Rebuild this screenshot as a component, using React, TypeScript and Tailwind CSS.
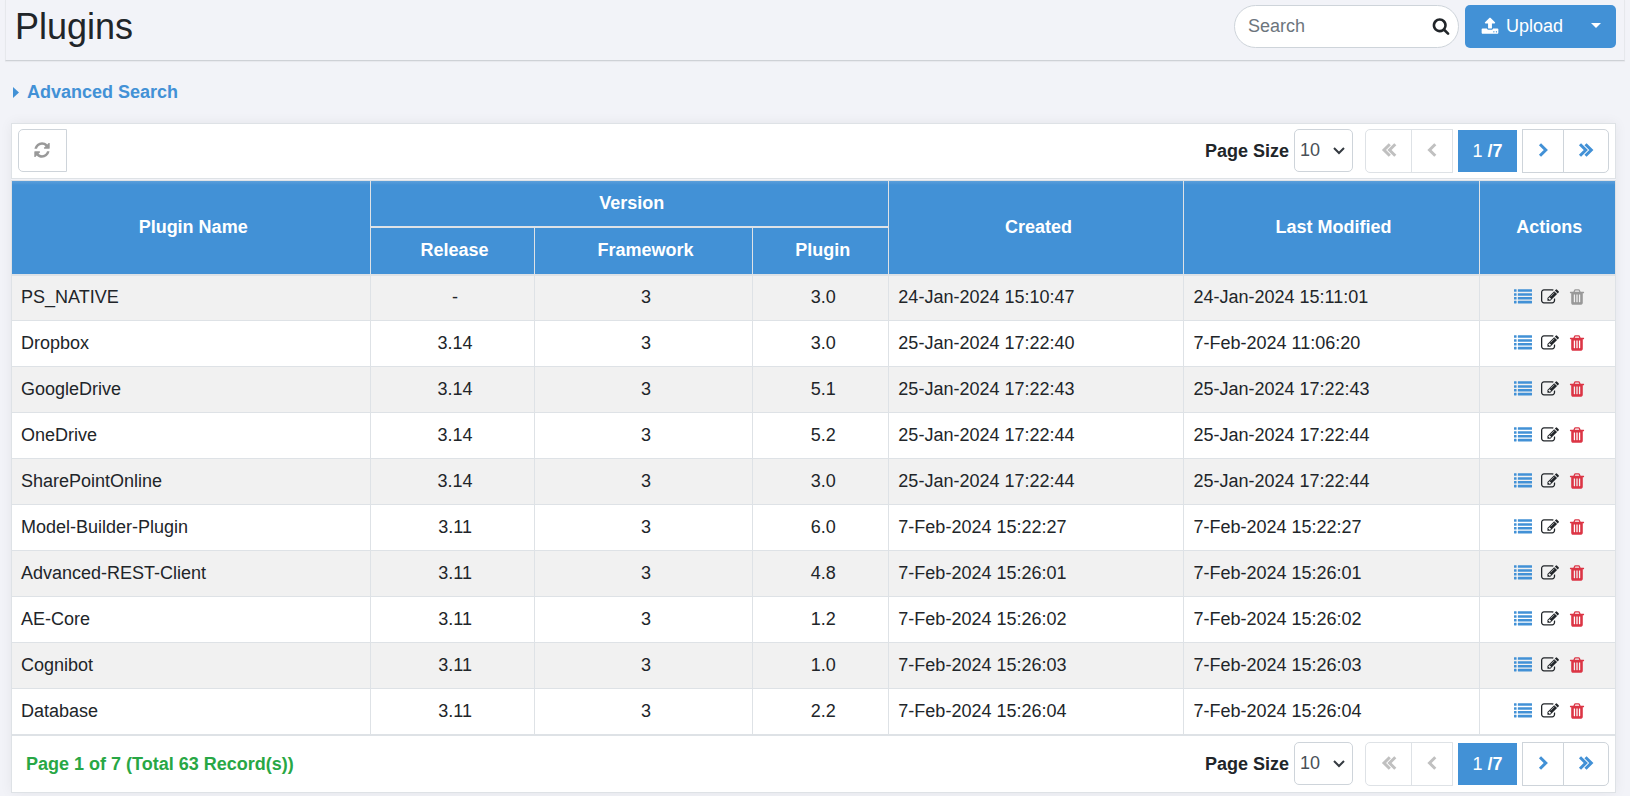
import type { ReactNode } from "react";

type Plugin = {
  name: string;
  release: string;
  framework: string;
  plugin: string;
  created: string;
  modified: string;
  locked?: boolean;
};

const plugins: Plugin[] = [
  { name: "PS_NATIVE", release: "-", framework: "3", plugin: "3.0", created: "24-Jan-2024 15:10:47", modified: "24-Jan-2024 15:11:01", locked: true },
  { name: "Dropbox", release: "3.14", framework: "3", plugin: "3.0", created: "25-Jan-2024 17:22:40", modified: "7-Feb-2024 11:06:20" },
  { name: "GoogleDrive", release: "3.14", framework: "3", plugin: "5.1", created: "25-Jan-2024 17:22:43", modified: "25-Jan-2024 17:22:43" },
  { name: "OneDrive", release: "3.14", framework: "3", plugin: "5.2", created: "25-Jan-2024 17:22:44", modified: "25-Jan-2024 17:22:44" },
  { name: "SharePointOnline", release: "3.14", framework: "3", plugin: "3.0", created: "25-Jan-2024 17:22:44", modified: "25-Jan-2024 17:22:44" },
  { name: "Model-Builder-Plugin", release: "3.11", framework: "3", plugin: "6.0", created: "7-Feb-2024 15:22:27", modified: "7-Feb-2024 15:22:27" },
  { name: "Advanced-REST-Client", release: "3.11", framework: "3", plugin: "4.8", created: "7-Feb-2024 15:26:01", modified: "7-Feb-2024 15:26:01" },
  { name: "AE-Core", release: "3.11", framework: "3", plugin: "1.2", created: "7-Feb-2024 15:26:02", modified: "7-Feb-2024 15:26:02" },
  { name: "Cognibot", release: "3.11", framework: "3", plugin: "1.0", created: "7-Feb-2024 15:26:03", modified: "7-Feb-2024 15:26:03" },
  { name: "Database", release: "3.11", framework: "3", plugin: "2.2", created: "7-Feb-2024 15:26:04", modified: "7-Feb-2024 15:26:04" },
];

const paths = {
  list: "M32 1280h192q32 0 32 32v192q0 32-32 32h-192q-32 0-32-32v-192q0-32 32-32zM32 896h192q32 0 32 32v192q0 32-32 32h-192q-32 0-32-32v-192q0-32 32-32zM32 512h192q32 0 32 32v192q0 32-32 32h-192q-32 0-32-32v-192q0-32 32-32zM32 128h192q32 0 32 32v192q0 32-32 32h-192q-32 0-32-32v-192q0-32 32-32zM416 1280h1344q32 0 32 32v192q0 32-32 32h-1344q-32 0-32-32v-192q0-32 32-32zM416 896h1344q32 0 32 32v192q0 32-32 32h-1344q-32 0-32-32v-192q0-32 32-32zM416 512h1344q32 0 32 32v192q0 32-32 32h-1344q-32 0-32-32v-192q0-32 32-32zM416 128h1344q32 0 32 32v192q0 32-32 32h-1344q-32 0-32-32v-192q0-32 32-32z",
  edit: "M888 1184l116-116-152-152-116 116v56h96v96h56zm440-720q-16-16-33 1l-350 350q-17 17-1 33t33-1l350-350q17-17 1-33zm80 594v190q0 119-84.5 203.5t-203.5 84.5h-832q-119 0-203.5-84.5t-84.5-203.5v-832q0-119 84.5-203.5t203.5-84.5h832q63 0 117 25 15 7 18 23 3 17-9 29l-49 49q-14 14-32 8-23-6-45-6h-832q-66 0-113 47t-47 113v832q0 66 47 113t113 47h832q66 0 113-47t47-113v-126q0-13 9-22l64-64q15-15 35-7t20 29zm-96-738l288 288-672 672h-288v-288zm444 132l-92 92-288-288 92-92q28-28 68-28t68 28l152 152q28 28 28 68t-28 68z",
  trash: "M704 1376v-704q0-14-9-23t-23-9h-64q-14 0-23 9t-9 23v704q0 14 9 23t23 9h64q14 0 23-9t9-23zm256 0v-704q0-14-9-23t-23-9h-64q-14 0-23 9t-9 23v704q0 14 9 23t23 9h64q14 0 23-9t9-23zm256 0v-704q0-14-9-23t-23-9h-64q-14 0-23 9t-9 23v704q0 14 9 23t23 9h64q14 0 23-9t9-23zm-544-992h448l-48-117q-7-9-17-11h-317q-10 2-17 11zm928 32v64q0 14-9 23t-23 9h-96v948q0 83-47 143.5t-113 60.5h-832q-66 0-113-58.5t-47-141.5v-952h-96q-14 0-23-9t-9-23v-64q0-14 9-23t23-9h309l70-167q15-37 54-63t79-26h320q40 0 79 26t54 63l70 167h309q14 0 23 9t9 23z",
  refresh: "M1639 1056q0 5-1 7-64 268-268 434.5t-478 166.5q-146 0-282.5-55t-243.5-157l-129 129q-19 19-45 19t-45-19-19-45v-448q0-26 19-45t45-19h448q26 0 45 19t19 45-19 45l-137 137q71 66 161 102t187 36q134 0 250-65t186-179q11-17 53-117 8-23 30-23h192q13 0 22.5 9.5t9.5 22.5zm25-800v448q0 26-19 45t-45 19h-448q-26 0-45-19t-19-45 19-45l138-138q-148-137-349-137-134 0-250 65t-186 179q-11 17-53 117-8 23-30 23h-199q-13 0-22.5-9.5t-9.5-22.5v-7q65-268 270-434.5t480-166.5q146 0 284 55.5t245 156.5l130-129q19-19 45-19t45 19 19 45z",
  upload: "M1344 1472q0-26-19-45t-45-19-45 19-19 45 19 45 45 19 45-19 19-45zm256 0q0-26-19-45t-45-19-45 19-19 45 19 45 45 19 45-19 19-45zm128-224v320q0 40-28 68t-68 28h-1472q-40 0-68-28t-28-68v-320q0-40 28-68t68-28h427q21 56 70.5 92t110.5 36h256q61 0 110.5-36t70.5-92h427q40 0 68 28t28 68zm-325-648q-17 40-59 40h-256v448q0 26-19 45t-45 19h-256q-26 0-45-19t-19-45v-448h-256q-42 0-59-40-17-39 14-69l448-448q18-19 45-19t45 19l448 448q31 30 14 69z",
  search: "M1216 832q0-185-131.5-316.5t-316.5-131.5-316.5 131.5-131.5 316.5 131.5 316.5 316.5 131.5 316.5-131.5 131.5-316.5zm512 832q0 52-38 90t-90 38q-54 0-90-38l-343-342q-179 124-399 124-143 0-273.5-55.5t-225-150-150-225-55.5-273.5 55.5-273.5 150-225 225-150 273.5-55.5 273.5 55.5 225 150 150 225 55.5 273.5q0 220-124 399l343 343q37 37 37 90z",
};

function Icon({ name }: { name: keyof typeof paths }) {
  return (
    <svg viewBox="0 0 1792 1792" aria-hidden="true" className="size-[18px] shrink-0 fill-current">
      <path d={paths[name]} />
    </svg>
  );
}

function Chevrons({ d }: { d: string }) {
  return (
    <svg viewBox="0 0 16 16" aria-hidden="true" className="size-4 fill-none stroke-current stroke-3">
      <path d={d} />
    </svg>
  );
}

function PageButton({ label, disabled, className, children }: { label: string; disabled?: boolean; className: string; children: ReactNode }) {
  return (
    <button
      type="button"
      aria-label={label}
      disabled={disabled}
      className={`flex h-11 items-center justify-center border border-[#ced4da] bg-white pb-0.5 text-[#4291d6] disabled:border-[#dee2e6] disabled:text-[#c0c0c0] ${className}`}
    >
      {children}
    </button>
  );
}

function Pager({ id }: { id: string }) {
  return (
    <div className="flex items-center">
      <label htmlFor={id} className="mr-[5px] font-bold">
        Page Size
      </label>
      <div className="relative mr-3 flex self-start">
        <select id={id} defaultValue="10" className="h-[43px] w-[59px] appearance-none rounded-[5px] border border-[#ced4da] bg-white pl-[5px] text-[#495057]">
          <option>10</option>
          <option>20</option>
          <option>50</option>
        </select>
        <svg viewBox="0 0 12 8" aria-hidden="true" className="pointer-events-none absolute top-[18px] right-2 h-2 w-3 fill-none stroke-[#343a40] stroke-2">
          <path d="M1 1l5 5 5-5" />
        </svg>
      </div>
      <nav aria-label="Pages" className="flex items-center">
        <PageButton label="First page" disabled className="w-[47px] rounded-l-[5px]">
          <Chevrons d="M8.800 2.200L3 8l5.800 5.800M14.300 2.200L8.500 8l5.800 5.800" />
        </PageButton>
        <PageButton label="Previous page" disabled className="-ml-px w-[42px]">
          <Chevrons d="M11.300 2.200L5.500 8l5.800 5.800" />
        </PageButton>
        <span className="mx-[5px] flex h-[42px] w-[59px] items-center justify-center bg-[#4291d6] font-bold text-white">
          <span className="font-normal">1</span>&nbsp;/7
        </span>
        <PageButton label="Next page" className="w-[42px]">
          <Chevrons d="M5 2.200L10.800 8L5 13.800" />
        </PageButton>
        <PageButton label="Last page" className="-ml-px w-[46px] rounded-r-[5px]">
          <Chevrons d="M2 2.200L7.800 8L2 13.800M7.500 2.200L13.300 8l-5.800 5.800" />
        </PageButton>
      </nav>
    </div>
  );
}

const headCell = "border border-[#dee2e6] border-b-2 pr-1 pl-2 text-center align-middle font-bold";
const cell = "border border-[#dee2e6] pr-1 pl-[9px]";

export default function App() {
  return (
    <div className="min-h-screen bg-[#f2f3f8] px-[5px] pb-1 font-['Liberation_Sans',Arial,sans-serif] text-lg leading-[27px] text-[#212529]">
      <header className="flex h-[61px] items-start justify-between border border-t-0 border-[#e6e8ec] border-b-[#ced1d6] pr-2 pl-[9px] shadow-[0_1px_1px_rgba(0,0,0,0.04)]">
        <h1 className="pt-[5px] text-4xl leading-[44px]">Plugins</h1>
        <div className="flex gap-1.5 pt-[5px]">
          <div className="relative flex text-[#212529]">
            <input
              type="text"
              aria-label="Search"
              placeholder="Search"
              className="h-[43px] w-[225px] rounded-full border border-[#ced4da] bg-white pr-10 pl-[13px] placeholder:text-[#6c757d]"
            />
            <button type="button" aria-label="Run search" className="absolute top-[12px] right-[9px]">
              <Icon name="search" />
            </button>
          </div>
          <div className="flex h-[43px] rounded-[5px] bg-[#4291d6] text-white">
            <button type="button" className="flex items-center gap-[7px] px-4">
              <span className="pb-0.5">
                <Icon name="upload" />
              </span>
              Upload
            </button>
            <button type="button" aria-label="More upload options" className="flex w-[37px] items-center pl-3">
              <svg viewBox="0 0 10 5" aria-hidden="true" className="mb-0.5 h-[5px] w-[10px] fill-current">
                <path d="M0 0h10L5 5z" />
              </svg>
            </button>
          </div>
        </div>
      </header>

      <main className="px-1.5">
        <a href="#advanced-search" className="flex w-fit items-center gap-2 pt-[18px] pb-[17px] pl-0.5 font-bold text-[#4291d6]">
          <svg viewBox="0 0 6 11" aria-hidden="true" className="h-[11px] w-1.5 fill-current">
            <path d="M0 0l6 5.500L0 11z" />
          </svg>
          Advanced Search
        </a>

        <div className="mr-[3px] shadow-[0_0_12px_rgba(0,0,0,0.06)]">
          <div className="flex h-14 items-start justify-between border border-[#dee2e6] bg-white px-1.5 pt-[5px]">
            <button type="button" aria-label="Refresh" className="flex h-[43px] w-[49px] items-center justify-center rounded-l-[5px] border border-[#ced4da] pr-px pb-0.5 text-[#999]">
              <Icon name="refresh" />
            </button>
            <Pager id="page-size-top" />
          </div>

          <table className="mt-px w-full table-fixed border-collapse bg-white">
            <colgroup>
              <col className="w-[22.4%]" />
              <col className="w-[10.2%]" />
              <col className="w-[13.6%]" />
              <col className="w-[8.5%]" />
              <col className="w-[18.4%]" />
              <col className="w-[18.4%]" />
              <col className="w-[8.5%]" />
            </colgroup>
            <thead className="bg-[#4291d6] bg-linear-to-b from-[#5c9fda] to-[#4291d6] to-[4px] text-white">
              <tr className="h-[46px]">
                <th rowSpan={2} className={headCell}>Plugin Name</th>
                <th colSpan={3} className={headCell}>Version</th>
                <th rowSpan={2} className={headCell}>Created</th>
                <th rowSpan={2} className={headCell}>Last Modified</th>
                <th rowSpan={2} className={headCell}>Actions</th>
              </tr>
              <tr className="h-[48px]">
                <th className={headCell}>Release</th>
                <th className={headCell}>Framework</th>
                <th className={headCell}>Plugin</th>
              </tr>
            </thead>
            <tbody>
              {plugins.map((p) => (
                <tr key={p.name} className="h-[46px] odd:bg-[#f1f1f1]">
                  <td className={cell}>{p.name}</td>
                  <td className={`${cell} text-center`}>{p.release}</td>
                  <td className={`${cell} text-center`}>{p.framework}</td>
                  <td className={`${cell} text-center`}>{p.plugin}</td>
                  <td className={cell}>{p.created}</td>
                  <td className={cell}>{p.modified}</td>
                  <td className={cell}>
                    <div className="flex items-center justify-center gap-[9px] pb-0.5">
                      <button type="button" aria-label={`Details of ${p.name}`} className="text-[#4291d6]">
                        <Icon name="list" />
                      </button>
                      <button type="button" aria-label={`Edit ${p.name}`}>
                        <Icon name="edit" />
                      </button>
                      <button type="button" aria-label={`Delete ${p.name}`} disabled={p.locked} className="text-[#dc3545] disabled:text-[#999]">
                        <Icon name="trash" />
                      </button>
                    </div>
                  </td>
                </tr>
              ))}
            </tbody>
          </table>

          <div className="flex h-[58px] items-center justify-between border border-[#dee2e6] bg-white px-1.5">
            <p className="pl-2 font-bold text-[#28a745]">Page 1 of 7 (Total 63 Record(s))</p>
            <Pager id="page-size-bottom" />
          </div>
        </div>
      </main>
    </div>
  );
}
